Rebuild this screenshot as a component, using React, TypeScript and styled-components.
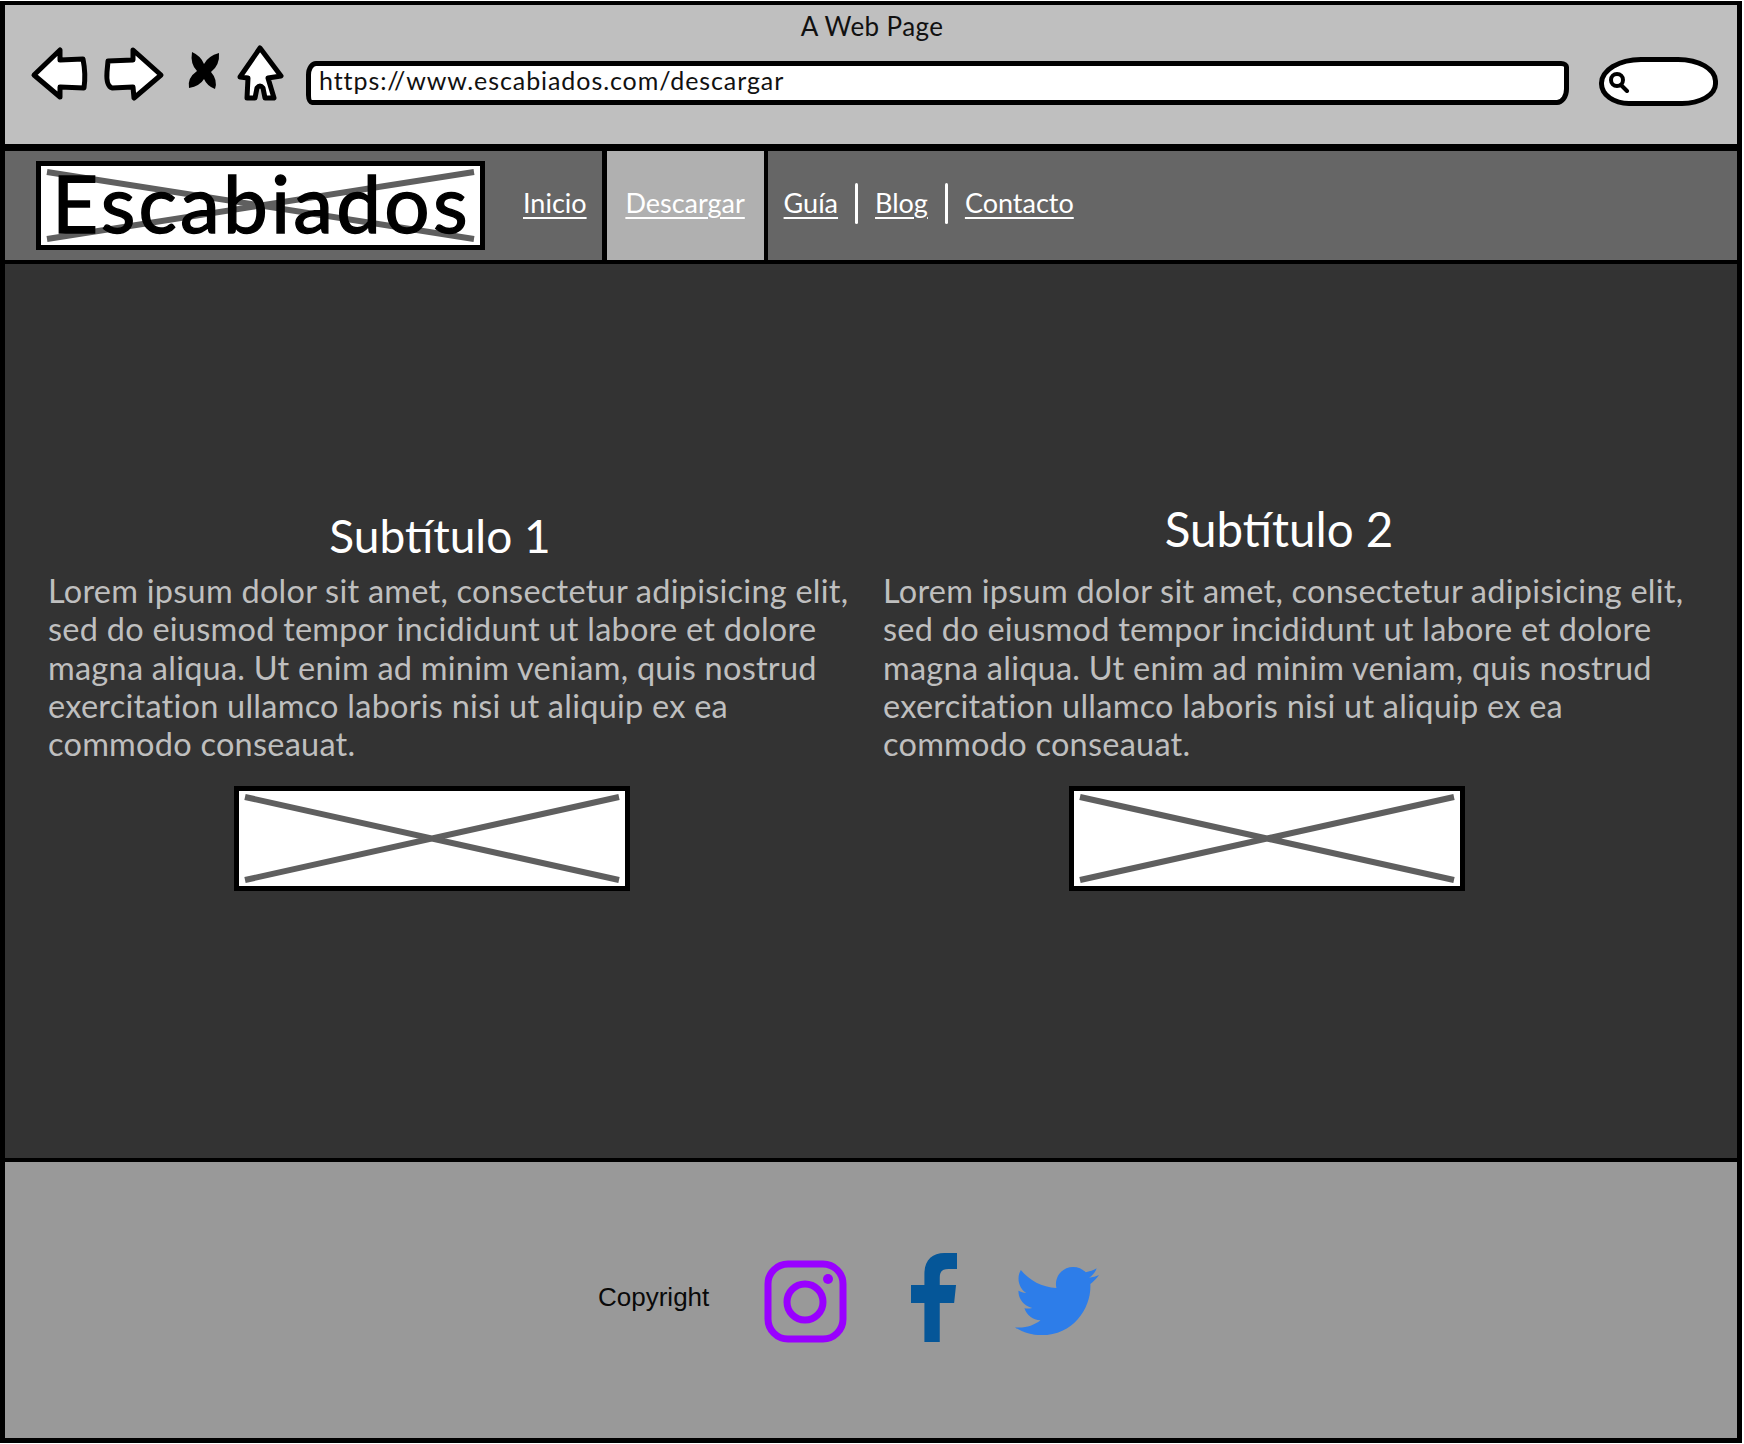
import React from "react";
import styled, { createGlobalStyle } from "styled-components";
import { FaTwitter } from "react-icons/fa";

const GlobalStyle = createGlobalStyle`
  html, body {
    margin: 0;
    padding: 0;
    background: #ffffff;
  }
`;

const Frame = styled.div`
  box-sizing: border-box;
  width: 1742px;
  height: 1442px;
  margin-top: 1px;
  border: 5px solid #000000;
  border-top-width: 4px;
  display: flex;
  flex-direction: column;
  font-family: "Lato", "Open Sans", sans-serif;
`;

const BrowserBar = styled.header`
  box-sizing: border-box;
  height: 146px;
  flex: none;
  background: #bfbfbf;
  border-bottom: 7px solid #000000;
  padding: 7px 18px 0 24px;
`;

const PageTitle = styled.div`
  padding-right: 4px;
  text-align: center;
  font-size: 26px;
  line-height: 28px;
  letter-spacing: 0.4px;
  color: #111111;
`;

const BrowserControls = styled.div`
  display: flex;
  align-items: center;
  margin-top: 7px;
`;

const ControlIcons = styled.svg`
  width: 262px;
  height: 62px;
  flex: none;
  overflow: visible;
`;

const UrlBar = styled.div`
  box-sizing: border-box;
  flex: none;
  width: 1263px;
  height: 44px;
  margin: 10px 0 0 15px;
  padding-left: 8px;
  background: #ffffff;
  border: 5px solid #000000;
  border-radius: 10px 8px 12px 6px / 14px 6px 16px 10px;
  font-size: 25px;
  line-height: 29px;
  letter-spacing: 0.92px;
  color: #111111;
`;

const SearchBar = styled.div`
  box-sizing: border-box;
  flex: none;
  display: flex;
  align-items: center;
  width: 119px;
  height: 49px;
  margin: 7px 0 0 30px;
  padding-left: 4px;
  background: #ffffff;
  border: 5px solid #000000;
  border-radius: 42px 40px 36px 30px / 26px 24px 22px 22px;
`;

const NavBar = styled.nav`
  box-sizing: border-box;
  height: 113px;
  flex: none;
  display: flex;
  align-items: center;
  background: #666666;
  border-bottom: 4px solid #000000;
  padding-left: 31px;
`;

const Placeholder = styled.div<{ $width: number; $height: number }>`
  position: relative;
  box-sizing: border-box;
  flex: none;
  width: ${(p) => p.$width}px;
  height: ${(p) => p.$height}px;
  background: #ffffff;
  border: 5px solid #000000;
`;

const LogoBox = styled(Placeholder)`
  margin-right: 38px;
`;

const Cross = styled.svg`
  position: absolute;
  inset: 0;
  width: 100%;
  height: 100%;
`;

const LogoText = styled.span`
  position: absolute;
  left: 11px;
  top: -12px;
  font-size: 80px;
  line-height: 96px;
  letter-spacing: 3.2px;
  color: #000000;
  -webkit-text-stroke: 1.4px #000000;
`;

const NavLink = styled.a`
  flex: none;
  margin-bottom: 6px;
  font-size: 27px;
  line-height: 34px;
  color: #ffffff;
  text-decoration: underline;
  text-underline-offset: 4px;
  text-decoration-thickness: 2px;
`;

const Tab = styled.div`
  box-sizing: border-box;
  flex: none;
  align-self: stretch;
  display: flex;
  align-items: center;
  justify-content: center;
  width: 166px;
  margin: 0 16px 0 15px;
  background: #b0b0b0;
  border-left: 5px solid #000000;
  border-right: 4px solid #000000;
`;

const NavSeparator = styled.span`
  flex: none;
  width: 3px;
  height: 41px;
  margin: 0 17px 4px;
  background: #ffffff;
  border-radius: 2px;
`;

const Main = styled.main`
  flex: 1;
  box-sizing: border-box;
  display: grid;
  grid-template-columns: 804px 804px;
  column-gap: 31px;
  align-items: start;
  padding: 238px 0 0 43px;
  background: #333333;
`;

const Column = styled.section<{ $headingGap: number }>`
  padding-top: ${(p) => p.$headingGap}px;
`;

const Subtitle = styled.h2<{ $trim: number; $after: number; $size: number }>`
  margin: 0 0 ${(p) => p.$after}px;
  padding-right: ${(p) => p.$trim}px;
  text-align: center;
  font-size: ${(p) => p.$size}px;
  line-height: 54px;
  font-weight: 400;
  color: #ffffff;
`;

const Paragraph = styled.p`
  margin: 0 0 23px;
  font-size: 32.5px;
  line-height: 38.3px;
  letter-spacing: 0.24px;
  color: #bfbfbf;
`;

const ImageBox = styled.div`
  margin-left: 186px;
`;

const Footer = styled.footer`
  flex: none;
  box-sizing: border-box;
  height: 280px;
  display: flex;
  align-items: flex-start;
  background: #999999;
  border-top: 4px solid #000000;
  padding: 91px 0 0 593px;
`;

const Copyright = styled.span`
  flex: none;
  margin-top: 29px;
  width: 166px;
  font-family: "Liberation Sans", Arial, sans-serif;
  font-size: 26px;
  line-height: 30px;
  color: #0a0a0a;
`;

const InstagramIcon = styled.svg`
  flex: none;
  width: 83px;
  height: 83px;
  margin-top: 7px;
`;

const FacebookIcon = styled.svg`
  flex: none;
  width: 46px;
  height: 89px;
  margin-left: 64px;
`;

const TwitterIcon = styled(FaTwitter)`
  flex: none;
  width: 84px;
  height: 84px;
  margin: 6px 0 0 58px;
  color: #2d7de9;
`;

function CrossLines({ width, height }: { width: number; height: number }) {
  return (
    <Cross viewBox={`0 0 ${width} ${height}`} preserveAspectRatio="none">
      <path
        d={`M6 6 L${width - 6} ${height - 6} M6 ${height - 6} L${width - 6} 6`}
        stroke="#5f5f5f"
        strokeWidth="6"
        fill="none"
      />
    </Cross>
  );
}

const LOREM =
  "Lorem ipsum dolor sit amet, consectetur adipisicing elit, sed do eiusmod tempor incididunt ut labore et dolore magna aliqua. Ut enim ad minim veniam, quis nostrud exercitation ullamco laboris nisi ut aliquip ex ea commodo conseauat.";

export default function App() {
  return (
    <>
      <GlobalStyle />
      <Frame>
        <BrowserBar>
          <PageTitle>A Web Page</PageTitle>
          <BrowserControls>
            <ControlIcons viewBox="29 47 262 62">
              <g fill="#ffffff" stroke="#000000" strokeWidth="5" strokeLinejoin="round">
                <path d="M34 75 L60 50 L60 60 L83 59 Q86 74 84 88 L60 87 L60 97 Z" />
                <path d="M108 61 L133 60 L133 50 L161 75 L134 98 L133 87 L112 88 Q106 86 107 72 Z" />
                <path d="M260 48 L281 76 L268 78 L274 98 L265 98 L263 88 Q260 84 257 88 L255 98 L247 98 L248 78 L240 77 Z" />
              </g>
              <path
                d="M192 52 Q201 56 204 64 Q208 56 219 53 Q220 65 211 72 Q218 80 215 89 Q207 86 204 79 Q200 86 189 88 Q187 78 197 71 Q190 64 192 52 Z"
                fill="#000000"
              />
            </ControlIcons>
            <UrlBar>https://www.escabiados.com/descargar</UrlBar>
            <SearchBar>
              <svg width="22" height="22" viewBox="0 0 22 22">
                <circle cx="9" cy="9" r="6" fill="none" stroke="#000000" strokeWidth="4" />
                <path d="M13 14 L19 20" stroke="#000000" strokeWidth="4" strokeLinecap="round" />
              </svg>
            </SearchBar>
          </BrowserControls>
        </BrowserBar>

        <NavBar>
          <LogoBox $width={449} $height={89}>
            <CrossLines width={439} height={79} />
            <LogoText>Escabiados</LogoText>
          </LogoBox>
          <NavLink href="#">Inicio</NavLink>
          <Tab>
            <NavLink href="#">Descargar</NavLink>
          </Tab>
          <NavLink href="#">Guía</NavLink>
          <NavSeparator />
          <NavLink href="#">Blog</NavLink>
          <NavSeparator />
          <NavLink href="#">Contacto</NavLink>
        </NavBar>

        <Main>
          <Column $headingGap={7}>
            <Subtitle $trim={20} $after={9} $size={46}>
              Subtítulo 1
            </Subtitle>
            <Paragraph>{LOREM}</Paragraph>
            <ImageBox>
              <Placeholder $width={396} $height={105}>
                <CrossLines width={386} height={95} />
              </Placeholder>
            </ImageBox>
          </Column>
          <Column $headingGap={0}>
            <Subtitle $trim={12} $after={16} $size={47.5}>
              Subtítulo 2
            </Subtitle>
            <Paragraph>{LOREM}</Paragraph>
            <ImageBox>
              <Placeholder $width={396} $height={105}>
                <CrossLines width={386} height={95} />
              </Placeholder>
            </ImageBox>
          </Column>
        </Main>

        <Footer>
          <Copyright>Copyright</Copyright>
          <InstagramIcon viewBox="0 0 83 83">
            <rect x="4" y="4" width="75" height="75" rx="20" fill="none" stroke="#9900ff" strokeWidth="7" />
            <circle cx="41" cy="42" r="18" fill="none" stroke="#9900ff" strokeWidth="7" />
            <circle cx="64" cy="19" r="5" fill="#9900ff" />
          </InstagramIcon>
          <FacebookIcon viewBox="0 0 48 89" preserveAspectRatio="none">
            <path
              d="M14 89 V50 H0 V32 H14 V21 C14 7 22 0 35 0 H48 V16 H39 C32 16 30 19 30 25 V32 H47 L45 50 H30 V89 Z"
              fill="#055698"
            />
          </FacebookIcon>
          <TwitterIcon />
        </Footer>
      </Frame>
    </>
  );
}
